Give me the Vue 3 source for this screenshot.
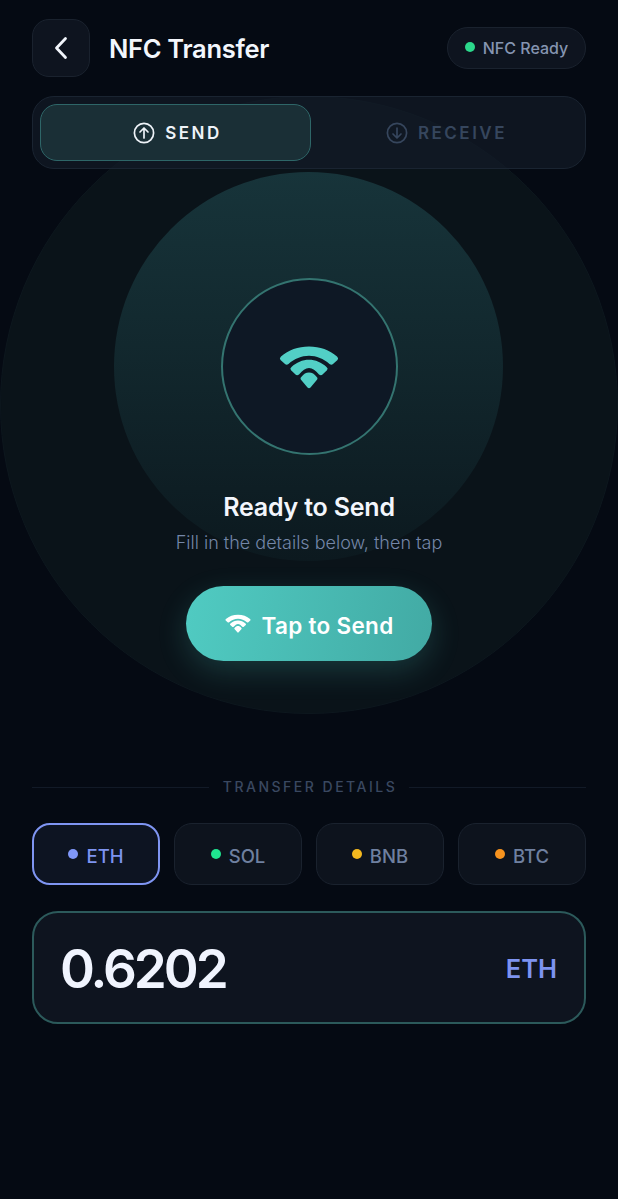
<template>
  <div class="screen">
    <div class="rings" aria-hidden="true">
      <div class="ring-outer"></div>
      <div class="ring-mid"></div>
    </div>

    <header class="top">
      <button class="back">
        <svg width="16" height="24" viewBox="0 0 16 24" fill="none" stroke="#f1f5fb" stroke-width="2.8" stroke-linecap="round" stroke-linejoin="round">
          <path d="M12.5 2.500 3.500 12l9 9.500" />
        </svg>
      </button>
      <h1>NFC Transfer</h1>
      <div class="status"><i class="dot"></i>NFC Ready</div>
    </header>

    <div class="tabs">
      <div
        v-for="t in tabs"
        :key="t.label"
        class="tab"
        :class="{ active: t.active }"
      >
        <svg width="22" height="22" viewBox="0 0 22 22" fill="none" stroke="currentColor" stroke-width="1.7" stroke-linecap="round" stroke-linejoin="round">
          <circle cx="11" cy="11" r="9.600" />
          <path :d="t.arrow" />
        </svg>
        {{ t.label }}
      </div>
    </div>

    <section class="hero">
      <div class="core">
        <svg width="60" height="44" viewBox="0 0 60 44" class="wifi-big">
          <path :d="wifiOuter" />
          <path :d="wifiMid" />
          <path :d="wifiInner" />
        </svg>
      </div>
      <h2>Ready to Send</h2>
      <p>Fill in the details below, then tap</p>
      <button class="tap">
        <svg width="26" height="19" viewBox="0 0 60 44" class="wifi-small">
          <path :d="wifiOuter" />
          <path :d="wifiMid" />
          <path :d="wifiInner" />
        </svg>
        <span>Tap to Send</span>
      </button>
    </section>

    <div class="divider"><span>TRANSFER DETAILS</span></div>

    <div class="coins">
      <div v-for="c in coins" :key="c.name" class="coin" :class="{ selected: c.selected }">
        <i :style="{ background: c.color }"></i><span>{{ c.name }}</span>
      </div>
    </div>

    <div class="amount">
      <span class="value">0.6202</span>
      <span class="unit">ETH</span>
    </div>
  </div>
</template>

<script setup>
const tabs = [
  { label: 'SEND', active: true, arrow: 'M11 16V6.500M7 10l4-4 4 4' },
  { label: 'RECEIVE', active: false, arrow: 'M11 6v9.500M7 12l4 4 4-4' }
]

const coins = [
  { name: 'ETH', color: '#8098fa', selected: true },
  { name: 'SOL', color: '#1fe48f' },
  { name: 'BNB', color: '#f3b81f' },
  { name: 'BTC', color: '#f7931e' }
]

const wifiOuter = 'M1.500 15Q0 13.200 2 11.600C9.500 5 19 1.500 30 1.500S50.500 5 58 11.600Q60 13.200 58.500 15L54 19Q52.500 20.500 50.500 19C44.500 13.800 37.500 10.800 30 10.800S15.500 13.800 9.500 19Q7.500 20.500 6 19Z'
const wifiMid = 'M12 25.300Q10.500 23.600 12.500 22C17.500 17.500 23.500 14.800 30 14.800S42.500 17.500 47.500 22Q49.500 23.600 48 25.300L43.500 29.500Q42 31 40 29.500C36.500 25.500 33.500 23 30 23S23.500 25.500 20 29.500Q18 31 16.500 29.500Z'
const wifiInner = 'M21.800 34.500Q20.800 33 22.500 31.800C24.500 29 27 27.500 30 27.500S35.500 29 37.500 31.800Q39.200 33 38.200 34.500L31.500 42.500Q30 44 28.500 42.500Z'
</script>

<style>
html, body {
  background: #050a13;
}
</style>

<style scoped>
.screen {
  position: relative;
  width: 618px;
  height: 1199px;
  box-sizing: border-box;
  padding: 19px 32px 0;
  overflow: hidden;
  background: #050a13;
  color: #f1f5fb;
  font-family: Inter, "Liberation Sans", sans-serif;
}

.rings {
  position: absolute;
  inset: 0;
}
.ring-outer {
  position: absolute;
  left: 0;
  top: 96px;
  width: 618px;
  height: 618px;
  border-radius: 50%;
  background: #0a1319;
  border: 1px solid #0d171e;
  box-sizing: border-box;
}
.ring-mid {
  position: absolute;
  left: 114px;
  top: 172px;
  width: 389px;
  height: 389px;
  border-radius: 50%;
  background: linear-gradient(180deg, #17343a 0%, #0c191f 100%);
}

.top {
  position: relative;
  display: flex;
  align-items: center;
  height: 58px;
}
.back {
  width: 58px;
  height: 58px;
  padding: 0;
  display: flex;
  align-items: center;
  justify-content: center;
  background: #0e141f;
  border: 1px solid #1a222e;
  border-radius: 17px;
}
h1 {
  margin: 0 0 0 19px;
  font-size: 25.500px;
  font-weight: 600;
  letter-spacing: -0.3px;
  color: #f3f6fc;
}
.status {
  margin-left: auto;
  height: 42px;
  width: 139px;
  box-sizing: border-box;
  display: flex;
  align-items: center;
  justify-content: center;
  gap: 8px;
  background: #0e141f;
  border: 1px solid #1a222e;
  border-radius: 21px;
  font-size: 16px;
  font-weight: 500;
  color: #8595b1;
}
.dot {
  width: 10px;
  height: 10px;
  border-radius: 50%;
  background: #2bd88b;
  margin-bottom: 2px;
}

.tabs {
  position: relative;
  margin-top: 19px;
  height: 73px;
  box-sizing: border-box;
  padding: 7px;
  display: grid;
  grid-template-columns: 271px 1fr;
  background: rgba(20, 28, 42, 0.6);
  border: 1px solid #1a2431;
  border-radius: 22px;
}
.tab {
  display: flex;
  align-items: center;
  justify-content: center;
  gap: 10px;
  padding-left: 4px;
  font-size: 17px;
  font-weight: 600;
  letter-spacing: 2.500px;
  border-radius: 17px;
  color: #36465d;
}
.tab.active {
  background: #1a2f36;
  border: 1.500px solid #2e6668;
  color: #eef3f8;
}

.hero {
  position: relative;
  display: flex;
  flex-direction: column;
  align-items: center;
}
.core {
  margin-top: 109px;
  width: 177px;
  height: 177px;
  box-sizing: border-box;
  border-radius: 50%;
  background: #0e1825;
  border: 2.500px solid #347470;
  display: flex;
  align-items: center;
  justify-content: center;
}
.wifi-big {
  display: block;
  fill: #52cfc6;
}
.wifi-small {
  fill: #fff;
}
h2 {
  margin: 36px 0 0;
  font-size: 25px;
  line-height: 32px;
  font-weight: 600;
  letter-spacing: -0.2px;
  color: #f3f6fc;
}
.hero p {
  margin: 7px 0 0;
  font-size: 18px;
  line-height: 26px;
  font-weight: 300;
  color: #7486a8;
}
.tap {
  margin-top: 30px;
  width: 246px;
  height: 75px;
  border: 0;
  border-radius: 38px;
  display: flex;
  align-items: center;
  justify-content: center;
  gap: 11px;
  background: linear-gradient(100deg, #50cbc2 0%, #42aaa4 100%);
  box-shadow: 0 10px 30px rgba(78, 205, 196, 0.2);
  color: #fff;
  font-family: inherit;
  font-size: 22.500px;
  font-weight: 600;
  letter-spacing: 0.3px;
}
.tap span {
  padding-top: 3px;
}

.divider {
  position: relative;
  margin-top: 116px;
  display: flex;
  align-items: center;
  gap: 12px;
  font-size: 14px;
  line-height: 20px;
  font-weight: 500;
  letter-spacing: 2.500px;
  color: #3a4860;
}
.divider span {
  margin-left: 2px;
}
.divider::before,
.divider::after {
  content: "";
  flex: 1;
  height: 1px;
  background: #121a27;
}

.coins {
  position: relative;
  margin-top: 26px;
  display: grid;
  grid-template-columns: repeat(4, 1fr);
  gap: 14px;
}
.coin {
  height: 62px;
  box-sizing: border-box;
  display: flex;
  align-items: center;
  justify-content: center;
  gap: 8px;
  background: #0d131d;
  border: 1.500px solid #1a222e;
  border-radius: 18px;
  font-size: 18.500px;
  font-weight: 500;
  color: #6f80a0;
}
.coin span {
  padding-top: 3px;
}
.coin i {
  width: 10px;
  height: 10px;
  border-radius: 50%;
}
.coin.selected {
  background: #0d1422;
  border: 2px solid #7f95f2;
  color: #7d93f0;
}

.amount {
  position: relative;
  margin-top: 26px;
  height: 113px;
  box-sizing: border-box;
  padding: 2px 27px 0 26px;
  display: flex;
  align-items: center;
  justify-content: space-between;
  background: #0e141f;
  border: 2.500px solid #2c5a5b;
  border-radius: 26px;
}
.value {
  font-size: 53px;
  font-weight: 600;
  letter-spacing: -3px;
  color: #f0f4fe;
}
.unit {
  font-size: 25.500px;
  font-weight: 600;
  color: #7d93f0;
}
</style>
